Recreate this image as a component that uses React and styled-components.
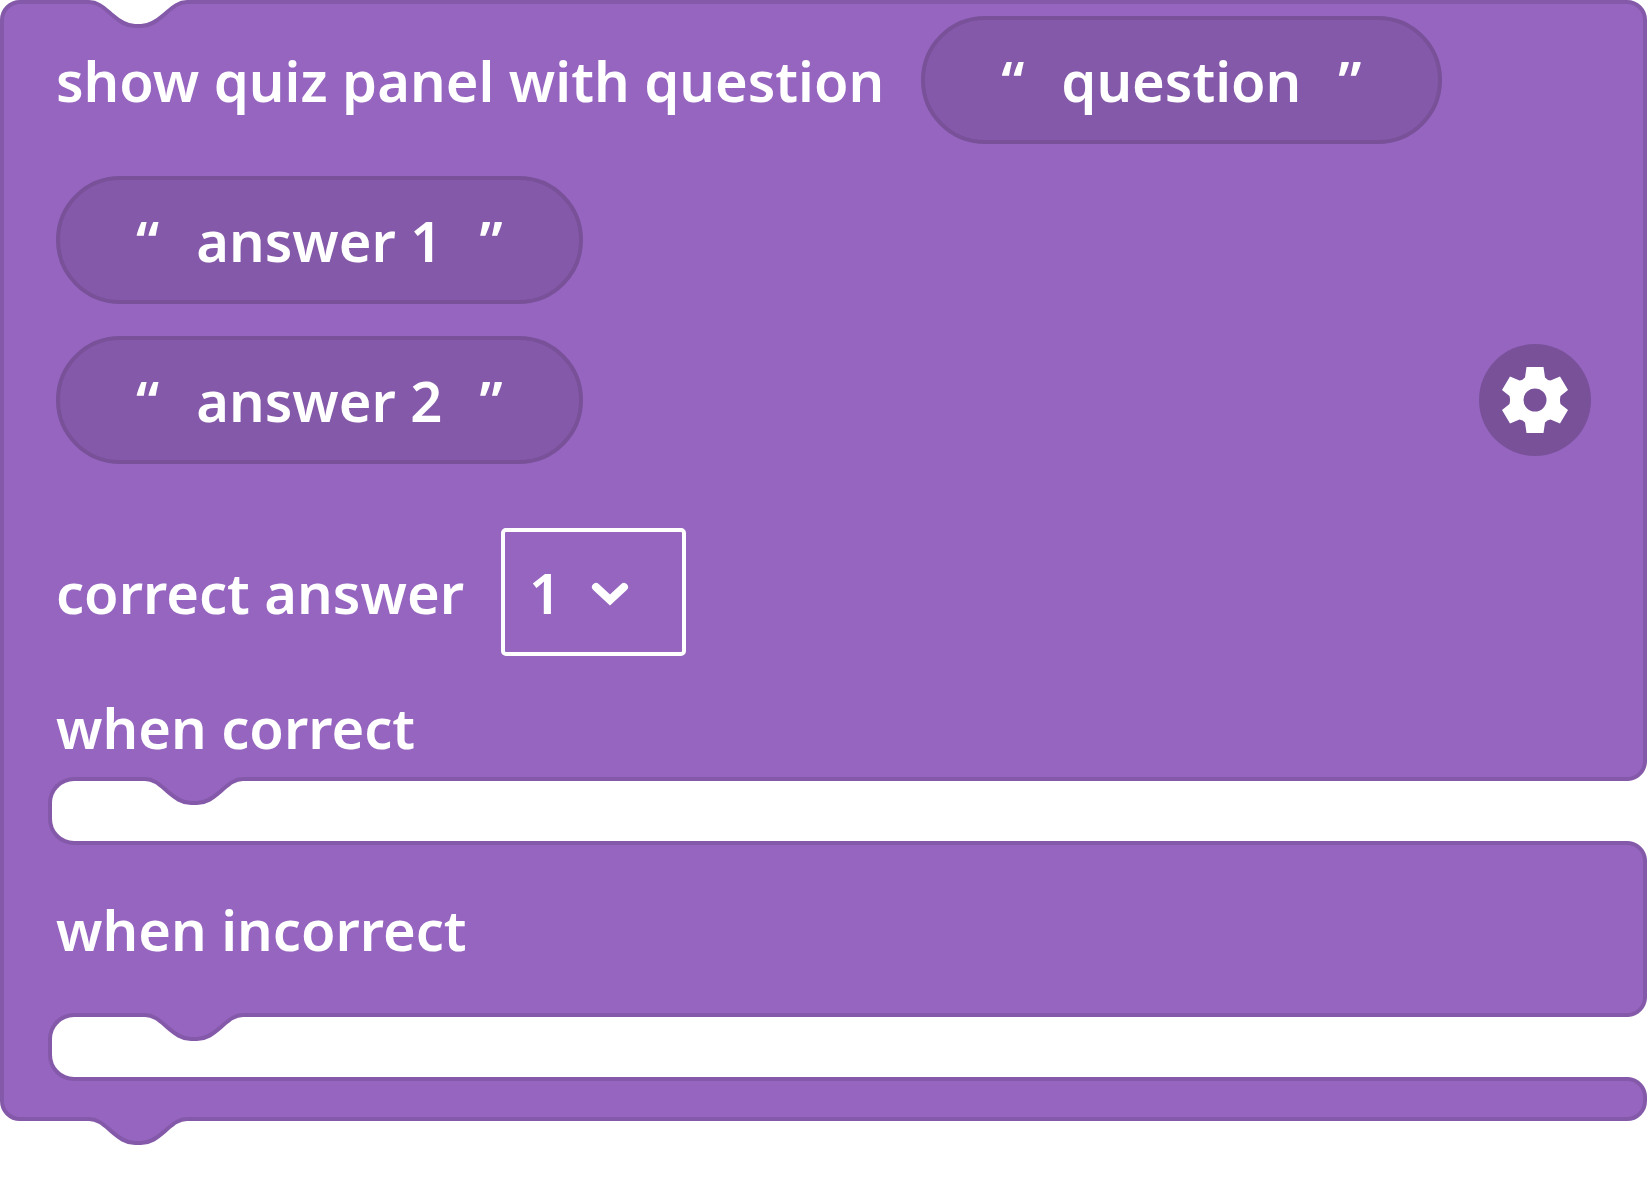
import React, { useState } from 'react'
import styled, { createGlobalStyle, ThemeProvider } from 'styled-components'

const theme = {
  block: '#9665c0',
  edge: '#8559a9',
  field: '#8559a9',
  fieldEdge: '#785199',
  page: '#fff',
  text: '#fff'
}

const GlobalStyle = createGlobalStyle`
  * {
    box-sizing: border-box;
  }

  body {
    margin: 0;
    background: #fff;
  }
`

const Block = styled.form`
  position: relative;
  margin-bottom: 56px;
  background: ${props => props.theme.block};
  border: 4px solid ${props => props.theme.edge};
  border-radius: 20px;
  color: ${props => props.theme.text};
  font-family: 'Noto Sans', 'Open Sans', sans-serif;
  font-size: 56px;
  font-weight: 600;
  line-height: 76px;
`

const Head = styled.div`
  display: flex;
  flex-direction: column;
  gap: 32px;
  padding: 12px 52px 0;
`

const Row = styled.div`
  display: flex;
  flex-wrap: wrap;
  align-items: center;
  gap: 32px 37px;
`

const AnswerRow = styled(Row)`
  margin-top: 32px;
`

const StatementRow = styled(Row)`
  padding: ${props => props.$first ? '33px 52px 12px' : '46px 52px'};
`

const Pill = styled.span`
  display: flex;
  align-items: center;
  gap: 37px;
  height: 128px;
  padding: 0 76px;
  background: ${props => props.theme.field};
  border: 4px solid ${props => props.theme.fieldEdge};
  border-radius: 64px;
`

const PillInput = styled.input`
  field-sizing: content;
  min-width: 24px;
  height: 76px;
  padding: 0;
  background: none;
  border: 0;
  outline: 0;
  color: inherit;
  font: inherit;
`

const SelectBox = styled.span`
  position: relative;
  display: flex;
  align-items: center;
`

const Select = styled.select`
  appearance: none;
  width: 185px;
  height: 128px;
  padding: 0 24px;
  background: none;
  border: 4px solid #fff;
  border-radius: 5px;
  color: inherit;
  font: inherit;

  option {
    background: ${props => props.theme.block};
  }
`

const Chevron = styled.svg`
  position: absolute;
  right: 56px;
  width: 40px;
  height: 40px;
  pointer-events: none;
`

const GearButton = styled.button`
  display: flex;
  justify-content: center;
  align-items: center;
  width: 112px;
  height: 112px;
  margin-left: auto;
  padding: 0;
  background: ${props => props.theme.fieldEdge};
  border: 0;
  border-radius: 50%;
  color: inherit;
  cursor: pointer;
`

// Opening for nested statements. The two pseudo elements round off the
// right ends of the arms above and below it.
const Slot = styled.div`
  position: relative;
  height: 68px;
  margin: 0 -4px 0 44px;
  background: ${props => props.theme.page};
  border: 4px solid ${props => props.theme.edge};
  border-right: 0;
  border-radius: 26px 0 0 26px;

  &::before,
  &::after {
    content: '';
    position: absolute;
    right: 0;
    width: 20px;
    height: 20px;
  }

  &::before {
    bottom: 100%;
    background: radial-gradient(
      circle at 0 0,
      ${props => props.theme.block} 15.5px,
      ${props => props.theme.edge} 16.5px 19.5px,
      ${props => props.theme.page} 20.5px
    );
  }

  &::after {
    top: 100%;
    background: radial-gradient(
      circle at 0 100%,
      ${props => props.theme.block} 15.5px,
      ${props => props.theme.edge} 16.5px 19.5px,
      ${props => props.theme.page} 20.5px
    );
  }
`

const Foot = styled.div`
  height: 36px;
`

const NotchSvg = styled.svg`
  position: absolute;
  left: ${props => props.$left};
  top: ${props => props.$top};
  display: block;
  width: 104px;
  height: 28px;
`

const NotchFill = styled.path`
  fill: ${props => props.theme[props.$fill]};
`

const NotchLine = styled.path`
  fill: none;
  stroke: ${props => props.theme.edge};
  stroke-width: 4px;
`

const NOTCH = 'h3 c9,0 15,6 22,12 c8,7 15,12 24,12 h6 c9,0 16,-5 24,-12 c7,-6 13,-12 22,-12 h3'

const Notch = ({ fill, left, top }) => (
  <NotchSvg viewBox='0 0 104 28' $left={left} $top={top} aria-hidden='true'>
    <NotchFill d={`M0,0 V2 ${NOTCH} V0 z`} $fill={fill} />
    <NotchLine d={`M0,2 ${NOTCH}`} />
  </NotchSvg>
)

const GearIcon = () => (
  <svg width='80' height='80' viewBox='0 0 80 80' aria-hidden='true'>
    <path
      fill='currentColor'
      fillRule='evenodd'
      d='M31.500,7 H48.500 L50,17.500 Q52,20 55.500,20.500 L65,16.500 L73,30 L65.500,36 Q64.500,40 65.500,44 L73,50 L65,63.500 L55.500,59.500 Q52,60 50,62.500 L48.500,73 H31.500 L30,62.500 Q28,60 24.500,59.500 L15,63.500 L7,50 L14.500,44 Q15.500,40 14.500,36 L7,30 L15,16.500 L24.500,20.500 Q28,20 30,17.500 Z M40,28.500 a11.500,11.500 0 1 0 0,23 a11.500,11.500 0 1 0 0,-23 Z'
    />
  </svg>
)

const TextField = ({ id, label, value, onChange }) => (
  <Pill>
    <span>“</span>
    <PillInput
      id={id}
      aria-label={label}
      value={value}
      onChange={e => onChange(e.target.value)}
    />
    <span>”</span>
  </Pill>
)

const App = () => {
  const [question, setQuestion] = useState('question')
  const [answers, setAnswers] = useState(['answer 1', 'answer 2'])
  const [correct, setCorrect] = useState('1')

  const setAnswer = (index, text) =>
    setAnswers(answers.map((answer, i) => i === index ? text : answer))

  return (
    <ThemeProvider theme={theme}>
      <GlobalStyle />
      <Block>
        <Notch fill='page' left='82px' top='-4px' />
        <Head>
          <Row>
            <label htmlFor='question'>show quiz panel with question</label>
            <TextField id='question' value={question} onChange={setQuestion} />
          </Row>
          {answers.map((answer, i) => (
            <Row key={i}>
              <TextField
                id={`answer-${i + 1}`}
                label={`answer ${i + 1}`}
                value={answer}
                onChange={text => setAnswer(i, text)}
              />
              {i === answers.length - 1 &&
                <GearButton type='button' aria-label='settings'>
                  <GearIcon />
                </GearButton>}
            </Row>
          ))}
          <AnswerRow>
            <label htmlFor='correct'>correct answer</label>
            <SelectBox>
              <Select id='correct' value={correct} onChange={e => setCorrect(e.target.value)}>
                {answers.map((answer, i) => (
                  <option key={i} value={i + 1}>{i + 1}</option>
                ))}
              </Select>
              <Chevron viewBox='0 0 40 40' aria-hidden='true'>
                <path d='M6,15 L20,28 L34,15' fill='none' stroke='#fff' strokeWidth='8' strokeLinecap='round' />
              </Chevron>
            </SelectBox>
          </AnswerRow>
        </Head>
        <StatementRow $first>when correct</StatementRow>
        <Slot>
          <Notch fill='block' left='90px' top='-4px' />
        </Slot>
        <StatementRow>when incorrect</StatementRow>
        <Slot>
          <Notch fill='block' left='90px' top='-4px' />
        </Slot>
        <Foot />
        <Notch fill='block' left='82px' top='100%' />
      </Block>
    </ThemeProvider>
  )
}

export default App
